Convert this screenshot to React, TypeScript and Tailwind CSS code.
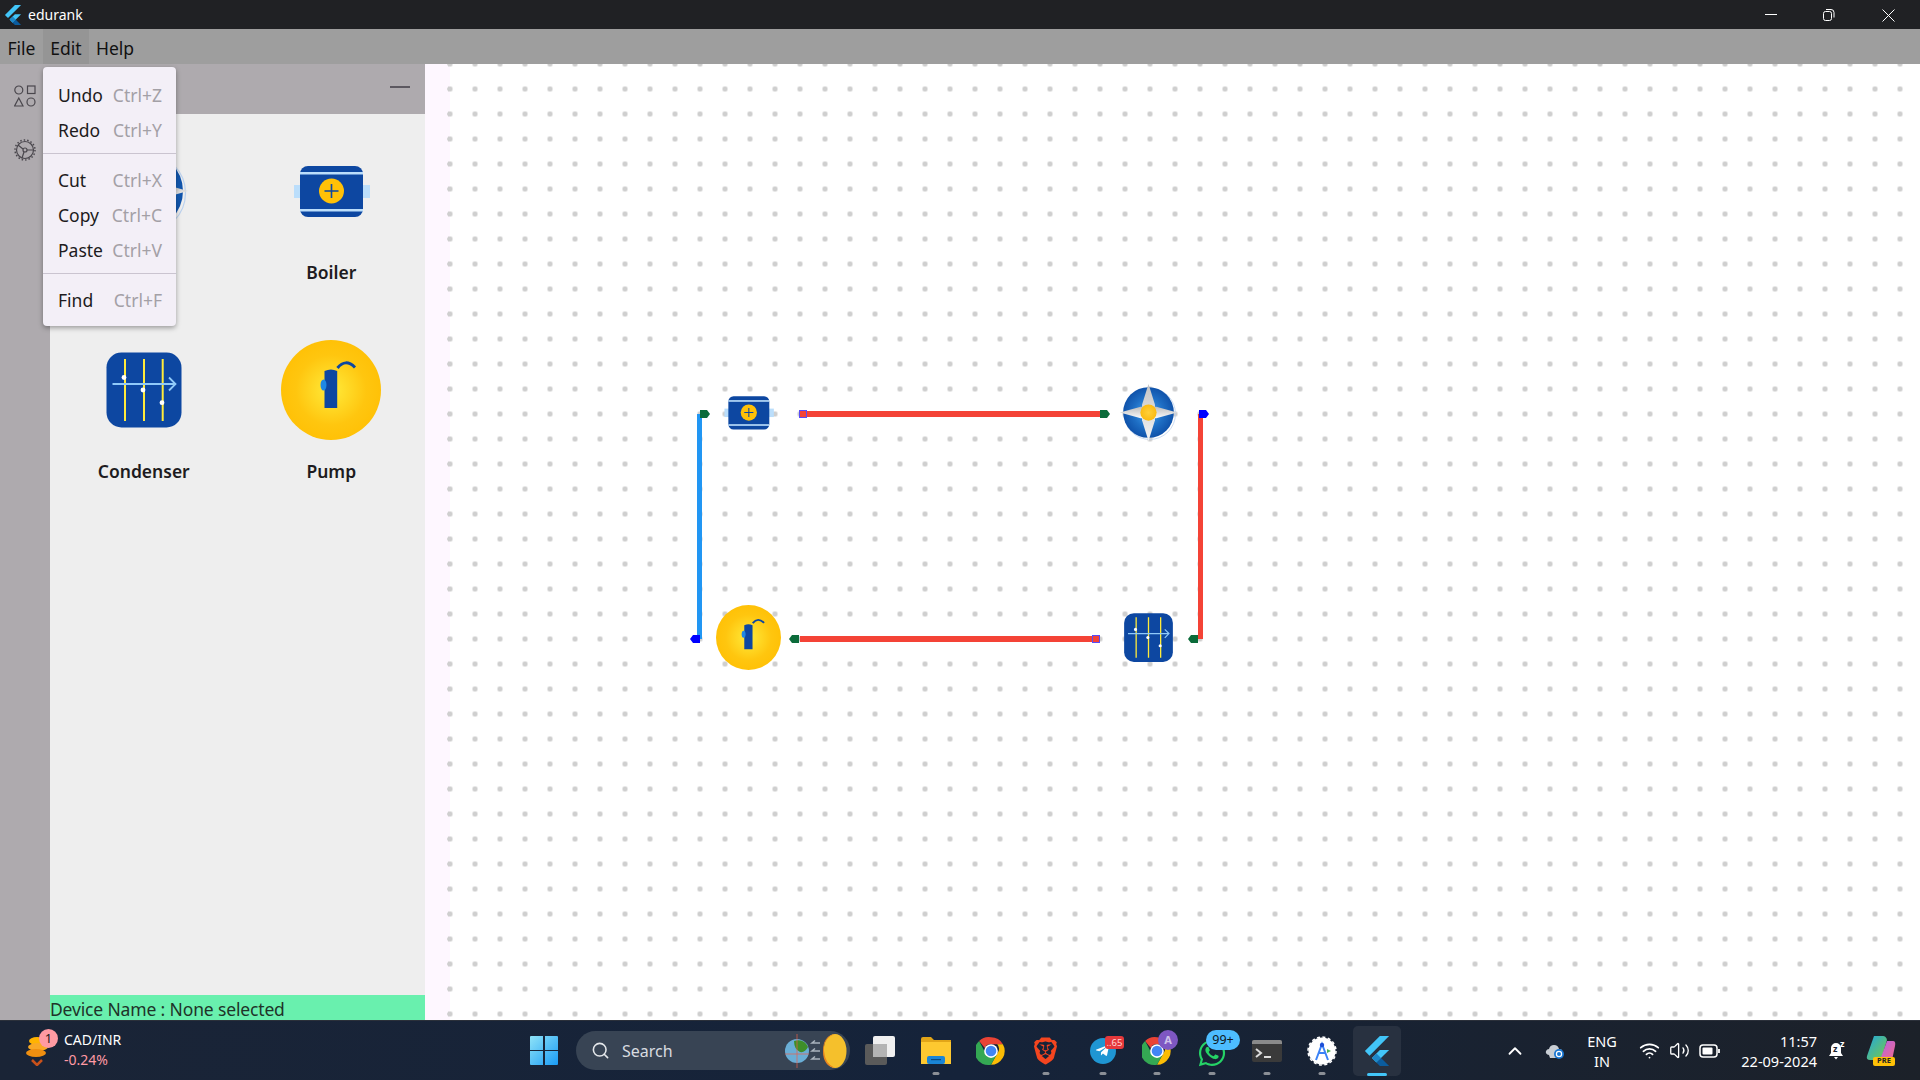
import { Search, ChevronUp, Wifi, Volume2 } from "lucide-react";
import { FaTelegramPlane, FaWhatsapp } from "react-icons/fa";
import { SiBrave } from "react-icons/si";

function Flutter({ className }: { className: string }) {
  return (
    <svg viewBox="0 0 24 24" className={className}>
      <path d="M14.3 0 2.3 12 6 15.7 21.7 0z" fill="#42c5f8" />
      <path d="M14.3 11.1 7.9 17.5l3.6 3.7 10.2-10.1z" fill="#42c5f8" />
      <path d="M11.5 21.2 15.2 17.5 21.7 24h-7.4z" fill="#0b5c9e" />
      <path d="M7.9 17.5 11.6 13.9l3.6 3.6-3.7 3.7z" fill="#1e88c9" />
    </svg>
  );
}

function Boiler({ className }: { className: string }) {
  return (
    <svg viewBox="0 0 100 100" className={className}>
      <rect x="13" y="44" width="76" height="13" fill="#bbdefb" />
      <rect x="19" y="25" width="63" height="51" rx="8" fill="#0d47a1" />
      <rect x="19" y="31" width="63" height="2.5" fill="#bbdefb" />
      <rect x="19" y="68" width="63" height="2.5" fill="#bbdefb" />
      <circle cx="50.5" cy="50" r="12.5" fill="#ffc107" />
      <path d="M50.500 43v14M43.500 50h14" stroke="#0d47a1" strokeWidth="1.6" />
    </svg>
  );
}

function Turbine({ className, id }: { className: string; id: string }) {
  return (
    <svg viewBox="0 0 100 100" className={className}>
      <defs>
        <radialGradient id={`${id}b`}>
          <stop offset="0" stopColor="#42a5f5" />
          <stop offset="0.6" stopColor="#1e6ec4" />
          <stop offset="1" stopColor="#0f52aa" />
        </radialGradient>
        <linearGradient id={`${id}s`} x1="0" y1="0" x2="0" y2="1">
          <stop offset="0" stopColor="#c4c4c4" />
          <stop offset="0.5" stopColor="#dcdcdc" />
          <stop offset="1" stopColor="#f5f5f5" />
        </linearGradient>
        <linearGradient id={`${id}t`} x1="0" y1="0" x2="0" y2="1">
          <stop offset="0" stopColor="#bdbdbd" />
          <stop offset="1" stopColor="#fafafa" />
        </linearGradient>
        <radialGradient id={`${id}y`}>
          <stop offset="0" stopColor="#ffd03a" />
          <stop offset="1" stopColor="#fbbb12" />
        </radialGradient>
      </defs>
      <circle cx="52" cy="52" r="39.5" fill="none" stroke="#bcd2ee" strokeWidth="1.2" />
      <circle cx="50" cy="50" r="39" fill={`url(#${id}b)`} />
      <path d="M50 6 60 38 60 62 50 94 40 62 40 38z" fill={`url(#${id}s)`} />
      <path d="M6 50 38 41 62 41 94 50 62 59 38 59z" fill={`url(#${id}t)`} />
      <circle cx="50" cy="50" r="12.5" fill={`url(#${id}y)`} />
    </svg>
  );
}

function Condenser({ className }: { className: string }) {
  return (
    <svg viewBox="0 0 100 100" className={className}>
      <rect x="12.5" y="12.5" width="75" height="75" rx="15" fill="#0d47a1" />
      <path d="M31 19v62M50 19v62M68.7 19v62" stroke="#ffeb3b" strokeWidth="2" />
      <path d="M18.5 44H81.5M75 37.5 81.5 44 75 50.5" stroke="#90caf9" strokeWidth="1.8" fill="none" />
      <circle cx="30" cy="37.5" r="2.4" fill="#fff" />
      <circle cx="49" cy="50" r="2.4" fill="#fff" />
      <circle cx="68" cy="62.7" r="2.4" fill="#fff" />
    </svg>
  );
}

function Pump({ className, id }: { className: string; id: string }) {
  return (
    <svg viewBox="0 0 100 100" className={className}>
      <defs>
        <radialGradient id={id}>
          <stop offset="0" stopColor="#ffeb3b" />
          <stop offset="0.7" stopColor="#ffc60f" />
          <stop offset="1" stopColor="#ffc107" />
        </radialGradient>
      </defs>
      <circle cx="50" cy="50" r="50" fill={`url(#${id})`} />
      <path d="M43.500 68V31q6.500-3 12.700 0V68z" fill="#0d47a1" />
      <ellipse cx="42.500" cy="45" rx="3" ry="5.500" fill="#1e88e5" />
      <path d="M56.500 28q8-10 17.500-.5" stroke="#0d47a1" strokeWidth="3" fill="none" />
    </svg>
  );
}

function Port({ className, color, left }: { className: string; color: string; left?: boolean }) {
  return (
    <svg viewBox="0 0 10 8" className={`absolute h-[8px] w-[10px] ${className}`}>
      <path d={left ? "M10 0H3L0 4l3 4h7z" : "M0 0h7l3 4-3 4H0z"} fill={color} />
    </svg>
  );
}

function MenuRow({ label, keys }: { label: string; keys: string }) {
  return (
    <div className="flex h-[35px] items-center justify-between pl-[15px] pr-[14px]">
      <span className="text-[#1d1b20]">{label}</span>
      <span className="text-[#a3a0a6]">{keys}</span>
    </div>
  );
}

function Tool({ label, children }: { label: string; children: React.ReactNode }) {
  return (
    <div className="flex flex-col items-center">
      {children}
      <div className="mt-[19px] h-[24px] text-[17.500px] font-semibold leading-[24px] text-[#1d1b20]">{label}</div>
    </div>
  );
}

function Chrome({ className }: { className: string }) {
  return (
    <svg viewBox="0 0 48 48" className={className}>
      <path d="M24 2a22 22 0 0 1 19 11H24a11 11 0 0 0-10 6L5 8a22 22 0 0 1 19-6z" fill="#ea4335" />
      <path d="M43 13a22 22 0 0 1-19 33l10-18a11 11 0 0 0 0-15z" fill="#fbbc05" />
      <path d="M5 8l10 19a11 11 0 0 0 19 1L24 46A22 22 0 0 1 5 8z" fill="#34a853" />
      <circle cx="24" cy="24" r="11" fill="#fff" />
      <circle cx="24" cy="24" r="8.500" fill="#4285f4" />
    </svg>
  );
}

function Dot() {
  return <span className="absolute bottom-[5px] left-1/2 h-[3px] w-[7px] -translate-x-1/2 rounded-full bg-[#8b8f96]" />;
}

export default function App() {
  return (
    <div className="relative flex h-[1080px] w-[1920px] flex-col overflow-hidden bg-white font-['Noto_Sans',sans-serif] text-[17.500px]">
      <div className="flex h-[29px] shrink-0 items-center bg-[#202124] pl-[3px] text-white">
        <Flutter className="h-[24px] w-[20px]" />
        <span className="ml-[5px] text-[14px]">edurank</span>
        <svg viewBox="0 0 140 16" className="ml-auto mr-[15px] h-[16px] w-[140px]" fill="none" stroke="#fff" strokeWidth="1">
          <path d="M0 7.500h12" />
          <rect x="58.500" y="4.500" width="8" height="9" rx="2" />
          <path d="M61 2.500h5a3 3 0 0 1 3 3v5" />
          <path d="M117.500 2.500l12 12M129.500 2.500l-12 12" />
        </svg>
      </div>
      <div className="flex h-[35px] shrink-0 items-center bg-[#9e9e9e] text-[#111]">
        <div className="flex h-full w-[43px] items-center justify-center pt-[3px]">File</div>
        <div className="flex h-full w-[46px] items-center justify-center bg-[#959595] pt-[3px]">Edit</div>
        <div className="flex h-full w-[52px] items-center justify-center pt-[3px]">Help</div>
      </div>
      <div className="flex min-h-0 flex-1">
        <div className="flex w-[50px] shrink-0 flex-col items-center bg-[#aeaaae] pt-[21px] text-[#4a474d]">
          <svg viewBox="0 0 22 22" className="h-[22px] w-[22px]" fill="none" stroke="currentColor" strokeWidth="1.200">
            <circle cx="4.800" cy="5" r="4" />
            <rect x="13.500" y="1" width="7.500" height="7.500" />
            <path d="M4.800 13 9 21H.6z" />
            <circle cx="17" cy="17" r="4" />
          </svg>
          <svg viewBox="0 0 22 22" className="mt-[32px] h-[22px] w-[22px]" fill="none" stroke="currentColor" strokeWidth="1.200">
            <circle cx="11" cy="11" r="8.500" />
            <circle cx="11" cy="11" r="2" />
            <path d="M9 10 4 6M13 11h6M10 13l-2 6" />
            <circle cx="11" cy="11" r="10" strokeDasharray="1.500 2" strokeWidth="1.500" />
          </svg>
        </div>
        <div className="flex w-[375px] shrink-0 flex-col">
          <div className="flex h-[50px] shrink-0 items-start justify-end bg-[#aeaaae] pr-[15px] pt-[22px]">
            <div className="h-[2px] w-[20px] bg-[#5c5860]" />
          </div>
          <div className="grid flex-1 grid-cols-2 content-start gap-y-[55.500px] bg-[#eeeeee] pt-[27px]">
            <Tool label="Turbine"><Turbine id="pt" className="h-[100px] w-[100px]" /></Tool>
            <Tool label="Boiler"><Boiler className="h-[100px] w-[100px]" /></Tool>
            <Tool label="Condenser"><Condenser className="h-[100px] w-[100px]" /></Tool>
            <Tool label="Pump"><Pump id="pp" className="h-[100px] w-[100px]" /></Tool>
          </div>
          <div className="h-[25px] shrink-0 bg-[#69f0ae] pt-[2px] leading-[25px] tracking-[-0.150px] text-[#1f3329]">Device Name : None selected</div>
        </div>
        <div className="w-[25px] shrink-0 bg-[#fef7ff] bg-[radial-gradient(circle,#cfcfcf_2.500px,transparent_3px)] bg-size-[50px_25px] bg-position-[0_-12.500px]" />
        <div className="relative flex-1 bg-white bg-[radial-gradient(circle,#cfcfcf_2.500px,transparent_3px)] bg-size-[25px_25px] bg-position-[-12.500px_-12.500px]">
          <div className="absolute left-[247px] top-[350px] h-[225px] w-[5px] bg-[#2196f3]" />
          <Port className="left-[250px] top-[346px]" color="#0b6b3a" />
          <Port className="left-[240px] top-[571px]" color="#0000ff" left />

          <div className="absolute left-[350px] top-[347px] h-[6px] w-[300px] bg-[#f44336]" />
          <div className="absolute left-[349px] top-[346px] h-[8px] w-[8px] border border-[#5a4cf5]" />
          <Port className="left-[650px] top-[346px]" color="#0b6b3a" />

          <div className="absolute left-[748px] top-[350px] h-[225px] w-[5px] bg-[#f44336]" />
          <Port className="left-[749px] top-[346px]" color="#0000ff" />
          <Port className="left-[738px] top-[571px]" color="#0b6b3a" left />

          <div className="absolute left-[350px] top-[572px] h-[6px] w-[300px] bg-[#f44336]" />
          <Port className="left-[339px] top-[571px]" color="#0b6b3a" left />
          <div className="absolute left-[642px] top-[571px] h-[8px] w-[8px] border border-[#5a4cf5]" />

          <Boiler className="absolute left-[266px] top-[316px] h-[65px] w-[65px]" />
          <Turbine id="ct" className="absolute left-[666px] top-[316px] h-[65px] w-[65px]" />
          <Condenser className="absolute left-[666px] top-[541px] h-[65px] w-[65px]" />
          <Pump id="cp" className="absolute left-[266px] top-[541px] h-[65px] w-[65px]" />
        </div>
      </div>
      <div className="flex h-[60px] shrink-0 items-center border-t border-[#2b303a] bg-gradient-to-r from-[#1a2436] via-[#15233a] to-[#1c2129] text-white">
        <div className="relative ml-[25px] flex h-full w-[505px] shrink-0 items-center">
          <svg viewBox="0 0 24 30" className="h-[30px] w-[24px]">
            <ellipse cx="12" cy="5" rx="8" ry="4" fill="#ffb300" />
            <ellipse cx="13" cy="11" rx="10" ry="4" fill="#f9a825" />
            <ellipse cx="11" cy="17" rx="10" ry="4" fill="#ef8f10" />
            <path d="M7 24l5 5 5-5" stroke="#c8511b" strokeWidth="2.500" fill="none" />
          </svg>
          <span className="absolute left-[14px] top-[8px] flex h-[19px] w-[19px] items-center justify-center rounded-full bg-[#ff9aa2] text-[13px] text-[#1a1a1a]">1</span>
          <div className="-mt-[2px] ml-[15px] text-[14px] leading-[20px]">
            <div>CAD/INR</div>
            <div className="text-[#ff99a4]">-0.24%</div>
          </div>
        </div>
        <svg viewBox="0 0 28 29" className="h-[29px] w-[28px] shrink-0">
          <defs>
            <linearGradient id="wl" x1="0" y1="0" x2="1" y2="1">
              <stop offset="0" stopColor="#8fe3f7" />
              <stop offset="1" stopColor="#1a9bf5" />
            </linearGradient>
          </defs>
          <path d="M0 1q0-1 1-1h12v14H0zM15 0h12q1 0 1 1v13H15zM0 15h13v14H1q-1 0-1-1zM15 15h13v13q0 1-1 1H15z" fill="url(#wl)" />
        </svg>
        <div className="ml-[18px] flex h-[39px] w-[274px] shrink-0 items-center rounded-full bg-[#384454] pl-[15px] pr-[3px]">
          <Search className="h-[19px] w-[19px] text-[#e4e7ea]" strokeWidth={2} />
          <span className="ml-[12px] text-[16px] text-[#d8dce0]">Search</span>
          <svg viewBox="0 0 62 34" className="ml-auto h-[34px] w-[62px] shrink-0">
            <circle cx="12" cy="17" r="12" fill="#6aaed6" />
            <path d="M9 7q10-3 14 6-3 6-8 5-6-3-6-11z" fill="#3e8e28" />
            <path d="M12 0v34M0 20h24" stroke="#e8604c" strokeWidth="0.700" />
            <path d="M35 9h-8l3-2.500M35 17h-8l3-2.500M35 25h-8l3-2.500" stroke="#a9b3bd" strokeWidth="1.500" fill="none" />
            <ellipse cx="50" cy="17" rx="11.500" ry="17" fill="#f5c02c" />
            <path d="M38 17Q38 2 50 0 38 4 39 17t11 17Q38 32 38 17z" fill="#e9851f" />
          </svg>
        </div>
        <div className="relative ml-[15px] flex h-full w-[30px] shrink-0 items-center justify-center">
          <svg viewBox="0 0 30 29" className="h-[29px] w-[30px]">
            <rect x="0" y="8" width="22" height="21" rx="2" fill="#5a5a5a" />
            <rect x="8" y="0" width="22" height="21" rx="2" fill="#f0f0f0" />
            <rect x="8" y="8" width="14" height="13" fill="#b4b4b4" />
          </svg>
        </div>
        <div className="relative ml-[25px] flex h-full w-[31px] shrink-0 items-center justify-center">
          <svg viewBox="0 0 30 27" className="h-[27px] w-[30px]">
            <path d="M0 2q0-2 2-2h8l3 3h17v24H0z" fill="#e2a518" />
            <rect x="0" y="5" width="30" height="22" fill="#fdc830" />
            <rect x="6" y="19" width="18" height="8" rx="2" fill="#1a85d6" />
            <rect x="10" y="22" width="10" height="1.200" fill="#0b4a80" />
          </svg>
          <Dot />
        </div>
        <div className="ml-[25px] flex h-full w-[30px] shrink-0 items-center justify-center">
          <Chrome className="h-[30px] w-[30px]" />
        </div>
        <div className="relative ml-[26px] flex h-full w-[27px] shrink-0 items-center justify-center">
          <SiBrave className="h-[30px] w-[27px] text-[#f4451f]" />
          <Dot />
        </div>
        <div className="relative ml-[30px] flex h-full w-[27px] shrink-0 items-center justify-center">
          <span className="flex h-[26px] w-[26px] items-center justify-center rounded-full bg-[#1f96d3]">
            <FaTelegramPlane className="h-[15px] w-[15px] text-white" />
          </span>
          <span className="absolute left-[16px] top-[15px] flex h-[13px] w-[19px] items-center justify-center rounded-[3px] bg-[#e5383b] text-[9.500px] leading-none text-[#ffd5d5]">..65</span>
          <Dot />
        </div>
        <div className="relative ml-[26px] flex h-full w-[30px] shrink-0 items-center justify-center">
          <Chrome className="h-[30px] w-[30px]" />
          <span className="absolute left-[16px] top-[9px] flex h-[20px] w-[20px] items-center justify-center rounded-full bg-[#7e57c2] text-[11px] font-bold text-[#cfc2ea]">A</span>
          <Dot />
        </div>
        <div className="relative ml-[25px] flex h-full w-[30px] shrink-0 items-center justify-center">
          <FaWhatsapp className="mt-[4px] h-[30px] w-[30px] text-[#25d366]" />
          <span className="absolute left-[9px] top-[9px] flex h-[20px] w-[34px] items-center justify-center rounded-full bg-[#4dbdff] text-[12.500px] text-[#0f1720]">99+</span>
          <Dot />
        </div>
        <div className="relative ml-[25px] flex h-full w-[30px] shrink-0 items-center justify-center">
          <svg viewBox="0 0 30 22" className="h-[22px] w-[30px]">
            <rect width="30" height="22" rx="2" fill="#3a3a3a" />
            <path d="M0 2q0-2 2-2h26q2 0 2 2v2H0z" fill="#8a8a8a" />
            <path d="M4 9l5 4-5 4" stroke="#ddd" strokeWidth="2" fill="none" />
            <path d="M12 17h7" stroke="#ddd" strokeWidth="2" />
          </svg>
          <Dot />
        </div>
        <div className="relative ml-[25px] flex h-full w-[30px] shrink-0 items-center justify-center">
          <svg viewBox="0 0 30 30" className="h-[30px] w-[30px]">
            <circle cx="15" cy="15" r="13.500" fill="#fff" />
            <circle cx="15" cy="15" r="14" fill="none" stroke="#fff" strokeWidth="1.500" strokeDasharray="3 2.500" />
            <path d="M9 24 15 8l6 16M11 17h8" stroke="#3b82f6" strokeWidth="2" fill="none" />
            <circle cx="15" cy="9" r="2.200" fill="#1d4ed8" />
            <path d="M20 13l4 2-4 2z" fill="#4caf50" />
          </svg>
          <Dot />
        </div>
        <div className="relative ml-[16px] flex h-[50px] w-[48px] shrink-0 items-center justify-center rounded-[5px] bg-[#283140]">
          <Flutter className="h-[30px] w-[30px]" />
          <span className="absolute bottom-0 left-1/2 h-[3px] w-[20px] -translate-x-1/2 rounded-full bg-[#42c5f8]" />
        </div>
        <ChevronUp className="ml-[103px] h-[22px] w-[22px] shrink-0 text-white" strokeWidth={2} />
        <svg viewBox="0 0 20 17" className="ml-[19px] h-[17px] w-[20px] shrink-0">
          <path d="M4 13q-4-1-3-4 1-2 3-2 1-4 5-4t5 4q2 0 3 1v8H5z" fill="#c9ced4" />
          <circle cx="14" cy="12" r="5" fill="#1976d2" />
          <circle cx="14" cy="12" r="2.600" fill="none" stroke="#fff" strokeWidth="1.200" />
        </svg>
        <div className="ml-[17px] flex w-[40px] shrink-0 flex-col items-center text-[14.500px] leading-[20px]">
          <span>ENG</span>
          <span>IN</span>
        </div>
        <Wifi className="ml-[17px] h-[21px] w-[21px] shrink-0" strokeWidth={2} />
        <Volume2 className="ml-[9px] h-[21px] w-[21px] shrink-0" strokeWidth={1.500} />
        <svg viewBox="0 0 22 14" className="ml-[9px] h-[14px] w-[22px] shrink-0" fill="none">
          <rect x="1" y="1" width="17" height="12" rx="3" stroke="#fff" strokeWidth="1.500" />
          <rect x="3.500" y="3.500" width="10" height="7" rx="1" fill="#fff" />
          <path d="M20 5v4" stroke="#fff" strokeWidth="1.800" />
        </svg>
        <div className="ml-[16px] flex w-[80px] shrink-0 flex-col items-end text-[14.500px] leading-[20px]">
          <span>11:57</span>
          <span>22-09-2024</span>
        </div>
        <div className="relative ml-[11px] h-[18px] w-[18px] shrink-0">
          <svg viewBox="0 0 18 18" className="h-[18px] w-[18px]" fill="#fff">
            <path d="M8 1a5 5 0 0 1 5 5v5l2 3H1l2-3V6a5 5 0 0 1 5-5zM6 15h4l-2 2.500z" />
          </svg>
          <span className="absolute left-[5px] top-[2px] text-[9px] font-bold leading-none text-[#1a2230]">z</span>
          <span className="absolute left-[12px] -top-[3px] text-[9px] font-bold leading-none text-white">z</span>
        </div>
        <div className="relative ml-[20px] h-[30px] w-[30px] shrink-0">
          <svg viewBox="0 0 30 24" className="h-[24px] w-[30px]">
            <defs>
              <linearGradient id="c1" x1="0" y1="0" x2="1" y2="1">
                <stop offset="0" stopColor="#1fa8e0" />
                <stop offset="1" stopColor="#7ac943" />
              </linearGradient>
              <linearGradient id="c2" x1="0" y1="0" x2="1" y2="1">
                <stop offset="0" stopColor="#b462e8" />
                <stop offset="1" stopColor="#f06a8a" />
              </linearGradient>
            </defs>
            <path d="M8 0h9q3 0 4 4L15 24H4Q0 24 1 20z" fill="url(#c1)" />
            <path d="M21 5h6q3 0 2 5l-3 14H14z" fill="url(#c2)" />
          </svg>
          <span className="absolute bottom-0 left-[7px] flex h-[9px] w-[22px] items-center justify-center rounded-[2px] bg-[#ffc107] text-[7.500px] font-bold leading-none text-[#222]">PRE</span>
        </div>
      </div>

      <div className="absolute left-[43px] top-[67px] w-[133px] rounded-[4px] bg-[#f3eff7] pb-[8px] pt-[11px] shadow-[0_2px_5px_rgba(0,0,0,0.35)]">
        <MenuRow label="Undo" keys="Ctrl+Z" />
        <MenuRow label="Redo" keys="Ctrl+Y" />
        <div className="mb-[9px] mt-[5px] h-px bg-[#cac4d0]" />
        <MenuRow label="Cut" keys="Ctrl+X" />
        <MenuRow label="Copy" keys="Ctrl+C" />
        <MenuRow label="Paste" keys="Ctrl+V" />
        <div className="mb-[9px] mt-[5px] h-px bg-[#cac4d0]" />
        <MenuRow label="Find" keys="Ctrl+F" />
      </div>
    </div>
  );
}
